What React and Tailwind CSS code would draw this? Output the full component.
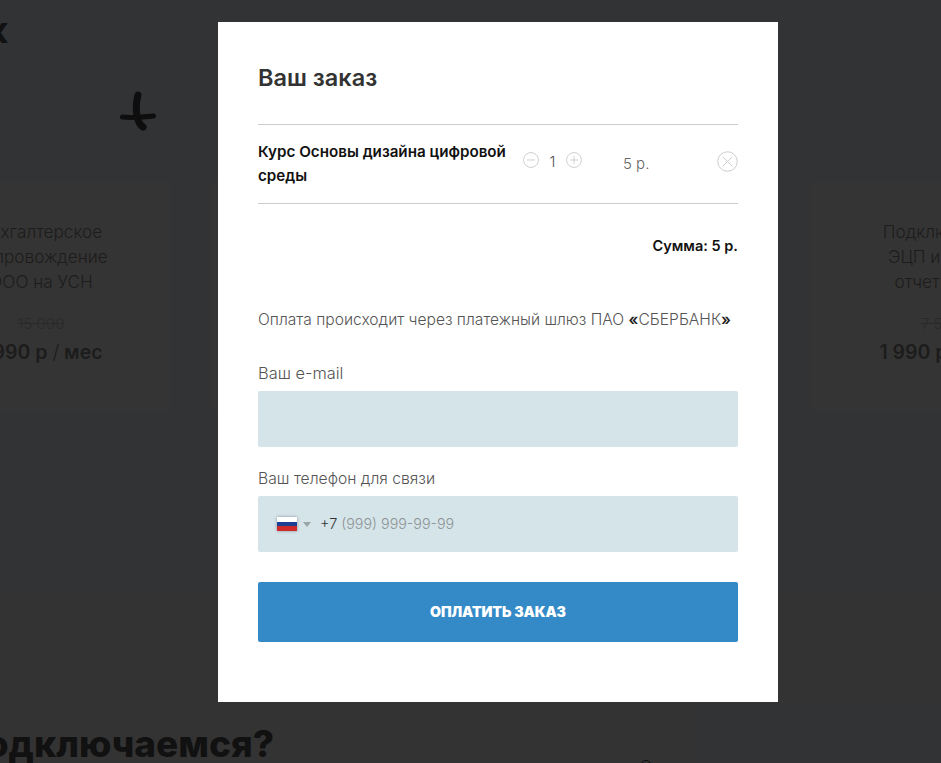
import React from "react";

const cards = [
  { lines: ["Бухгалтерское", "сопровождение", "ООО на УСН"], old: "15 000", price: "1 990 р" },
  { lines: ["Регистрация", "ООО"], old: "5 000", price: "1 990 р" },
  { lines: ["Регистрация", "ИП"], old: "5 000", price: "1 990 р" },
  { lines: ["Подключение", "ЭЦП и сдача", "отчетности"], old: "7 500", price: "1 990 р" },
];

function Card({ lines, old, price }) {
  return (
    <div className="w-[260px] h-[231px] shrink-0 bg-[#353434] pt-[38px] text-center text-[#1c1c1c]">
      <div className="text-[17.2px] leading-[25px] font-light">
        {lines.map((l) => (
          <div key={l}>{l}</div>
        ))}
      </div>
      <div className="mt-[20px] text-[15px] leading-[20px] font-light text-[#292929] line-through">{old}</div>
      <div className="mt-[5px] text-[19.5px] leading-[26px] font-semibold whitespace-nowrap">
        {price} <span className="font-light">/</span> мес
      </div>
    </div>
  );
}

function CircleIcon({ size, kind }) {
  return (
    <svg width={size} height={size} viewBox="0 0 20 20" fill="none" stroke="#c9c9c9" strokeWidth={kind === "x" ? 0.9 : 1.1} className="shrink-0">
      <circle cx="10" cy="10" r="9.3" />
      {kind !== "x" && <path d="M5 10h10" />}
      {kind === "plus" && <path d="M10 5v10" />}
      {kind === "x" && <path d="M5.5 5.5l9 9M14.5 5.5l-9 9" />}
    </svg>
  );
}

export default function App() {
  return (
    <div className="relative w-[941px] h-[763px] overflow-hidden bg-[#323335] font-['Inter','Noto_Sans',sans-serif]">
      {/* page behind the overlay */}
      <div className="h-[595px]">
        <div className="h-[90px] pt-[10px] -ml-[13px] text-[36px] leading-[40px] font-bold text-[#111]">к</div>
        <div className="pl-[119px] h-[91px]">
          <svg width="38" height="42" viewBox="0 0 38 42" fill="none" stroke="#0e0e0e" strokeLinecap="round">
            <path d="M19 5C17 12 17 20 18 26C19 31 21 35 24 37" strokeWidth="7" />
            <path d="M3.5 27C12 28 25 27 34.5 26" strokeWidth="5" />
          </svg>
        </div>
        <div className="flex gap-[40px] -ml-[89px]">
          {cards.map((c) => (
            <Card key={c.lines[0]} {...c} />
          ))}
        </div>
      </div>
      <div className="h-[168px] flex bg-[#343333]">
        <div className="w-[736px] pt-[124px] -ml-[42px] shrink-0 text-[37px] leading-[50px] font-extrabold text-[#111] whitespace-nowrap">
          Подключаемся?
        </div>
        <div className="flex-1 bg-[#323335] mt-[107px] pt-[52px]">
          <div className="-ml-[54px] text-[16px] leading-[24px] font-light text-[#111] whitespace-nowrap">Оставьте заявку</div>
        </div>
      </div>

      {/* modal */}
      <div className="absolute left-[218px] top-[22px] w-[560px] h-[680px] bg-white px-[40px] pt-[40px]">
        <h2 className="text-[23.5px] leading-[32px] font-semibold text-[#333] h-[62px]">Ваш заказ</h2>
        <div className="flex h-[80px] border-y border-[#cccccc] pt-[15px]">
          <div className="w-[265px] shrink-0 text-[15.2px] leading-[24px] font-semibold text-[#111]">
            Курс Основы дизайна цифровой среды
          </div>
          <div className="flex items-start h-[24px] pt-[12px]">
            <div className="flex items-center h-[16px]">
              <CircleIcon size={16} kind="minus" />
              <span className="w-[27px] text-center text-[15px] font-light text-[#555] translate-y-[2px]">1</span>
              <CircleIcon size={16} kind="plus" />
            </div>
          </div>
          <div className="ml-[41px] w-[95px] pt-[12px] text-[15px] leading-[24px] font-light text-[#666] whitespace-nowrap">5 р.</div>
          <div className="pt-[11px]">
            <CircleIcon size={21} kind="x" />
          </div>
        </div>
        <div className="mt-[30px] text-right text-[14.5px] leading-[24px] font-semibold text-[#111]">Сумма: 5 р.</div>
        <p className="mt-[50px] text-[15.6px] leading-[24px] font-light text-[#555] whitespace-nowrap">
          Оплата происходит через платежный шлюз ПАО <b className="font-semibold text-[#222]">«</b>СБЕРБАНК<b className="font-semibold text-[#222]">»</b>
        </p>
        <div className="mt-[30px] h-[24px] text-[16.4px] leading-[22px] font-light text-[#555]">Ваш e-mail</div>
        <div className="mt-[5px] h-[56px] rounded-[2px] bg-[#d5e4e9]" />
        <div className="mt-[20px] text-[15.7px] leading-[24px] font-light text-[#555]">Ваш телефон для связи</div>
        <div className="mt-[5px] h-[56px] rounded-[2px] bg-[#d5e4e9] flex items-center pl-[19px]">
          <div className="w-[20px] h-[14px] flex flex-col shadow-[0_0_3px_rgba(0,0,0,0.35)]">
            <div className="flex-1 bg-white" />
            <div className="flex-1 bg-[#1c3f94]" />
            <div className="flex-1 bg-[#cf2a2a]" />
          </div>
          <div className="ml-[6px] w-0 h-0 border-x-[4px] border-x-transparent border-t-[5px] border-t-[#9aa5aa]" />
          <span className="ml-[9px] text-[14.5px] font-light text-[#333]">+7</span>
          <span className="ml-[4px] text-[14.3px] font-light text-[#8f9496]">(999) 999-99-99</span>
        </div>
        <button className="mt-[30px] w-full h-[60px] rounded-[2px] bg-[#348ac7] text-white text-[14.2px] font-black uppercase tracking-[-0.1px]">
          Оплатить заказ
        </button>
      </div>
    </div>
  );
}
